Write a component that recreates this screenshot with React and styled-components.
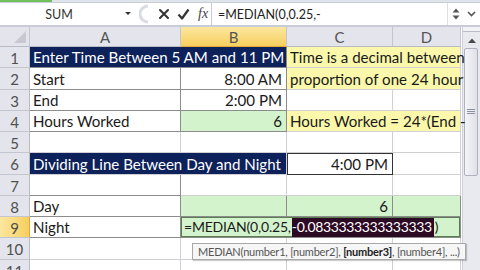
import React from 'react'
import styled, { createGlobalStyle, css } from 'styled-components'

const GlobalStyle = createGlobalStyle`
  html, body {
    margin: 0;
    padding: 0;
    background: #fff;
  }
  body {
    font-family: Lato, "Open Sans", sans-serif;
  }
`

const COLS = '30px 151px 106px 106px 68px'
const ROW_H = 21.25

const colors = {
  navy: '#0d215b',
  yellow: '#fbf8ac',
  green: '#d3f3cd',
  grid: '#d0d0d4',
  line: '#8c8c8c',
  header: '#e3e4ec',
}

const Page = styled.div`
  width: 480px;
  height: 270px;
  overflow: hidden;
  display: flex;
  flex-direction: column;
  background: #fff;
`

const RibbonEdge = styled.div`
  height: 3px;
  background: linear-gradient(to right, #6fbf5c 0, #6fbf5c 52px, #dfe3ea 52px);
  border-bottom: 1px solid #c9ced8;
  box-sizing: border-box;
`

const FormulaBar = styled.div`
  height: 22px;
  display: flex;
  align-items: stretch;
  background: #fff;
`

const NameBox = styled.div`
  width: 135px;
  position: relative;
  display: flex;
  align-items: center;
  justify-content: center;
  font-size: 12.5px;
  color: #333;
  padding-right: 17px;
  box-sizing: border-box;
`

const NameArrow = styled.span`
  position: absolute;
  right: 4px;
  top: 9px;
  width: 0;
  height: 0;
  border-left: 3px solid transparent;
  border-right: 3px solid transparent;
  border-top: 3px solid #333;
`

const Tools = styled.div`
  width: 76px;
  display: flex;
  align-items: center;
  gap: 7px;
  padding-left: 4px;
  box-sizing: border-box;
  background: #fff;
`

const Fx = styled.span`
  font-family: "Liberation Serif", serif;
  font-style: italic;
  font-size: 14px;
  color: #444;
  margin-left: 1px;
`

const FormulaInput = styled.div`
  flex: 1;
  display: flex;
  align-items: center;
  padding-left: 6px;
  font-size: 12.5px;
  color: #222;
  border-left: 1px solid #c8ccd4;
`

const Spin = styled.div`
  width: 32px;
  display: flex;
  align-items: center;
  justify-content: space-around;
  border-left: 1px solid #dde0e6;
`

const Gap = styled.div`
  height: 2px;
  background: #c8ccd6;
`

const Sheet = styled.div`
  flex: 1;
  display: flex;
  overflow: hidden;
`

const Grid = styled.div`
  width: 462px;
  display: grid;
  grid-template-columns: ${COLS};
  grid-template-rows: 20px repeat(11, ${ROW_H}px);
  position: relative;
`

const ColHead = styled.div`
  background: ${(p) => (p.$active ? 'linear-gradient(#fce7a0, #f7cf5e)' : colors.header)};
  border-right: 1px solid #c3c5cf;
  border-bottom: 1px solid ${(p) => (p.$active ? '#e3a93a' : '#b8bac6')};
  display: flex;
  align-items: center;
  justify-content: center;
  font-size: 15px;
  color: #555;
  box-sizing: border-box;
`

const Corner = styled(ColHead)`
  position: relative;
  &::after {
    content: '';
    position: absolute;
    right: 3px;
    bottom: 3px;
    width: 0;
    height: 0;
    border-left: 12px solid transparent;
    border-bottom: 12px solid #c7c8d0;
  }
`

const RowHead = styled.div`
  background: ${(p) => (p.$active ? 'linear-gradient(to right, #fce7a0, #f7cf5e)' : colors.header)};
  border-right: 1px solid ${(p) => (p.$active ? '#e3a93a' : '#b8bac6')};
  border-bottom: 1px solid #c3c5cf;
  display: flex;
  align-items: center;
  justify-content: center;
  padding-top: 2px;
  font-size: 15px;
  color: #505050;
  box-sizing: border-box;
`

const fills = {
  navy: colors.navy,
  yellow: colors.yellow,
  green: colors.green,
  white: '#fff',
}

const Cell = styled.div`
  grid-column: ${(p) => p.$col} / span ${(p) => p.$span || 1};
  background: ${(p) => fills[p.$fill || 'white']};
  color: ${(p) => (p.$fill === 'navy' ? '#fff' : '#1a1a1a')};
  border-right: 1px solid ${(p) => (p.$dark ? colors.line : colors.grid)};
  border-bottom: 1px solid ${(p) => (p.$dark ? colors.line : colors.grid)};
  box-sizing: border-box;
  display: flex;
  align-items: flex-end;
  justify-content: ${(p) => (p.$right ? 'flex-end' : 'flex-start')};
  padding: 0 4px 1px 3px;
  font-size: 15.1px;
  line-height: 18px;
  white-space: nowrap;
  overflow: visible;
  ${(p) =>
    p.$box &&
    css`
      outline: 1px solid #333;
      outline-offset: -1px;
    `}
`

const Editing = styled(Cell)`
  box-shadow: inset 0 0 0 1px #5a7d52;
  position: relative;
  z-index: 2;
  font-size: 14px;
  letter-spacing: -0.2px;
  padding-left: 3px;
`

const Selected = styled.span`
  background: #2c0a24;
  color: #fff;
  letter-spacing: -0.35px;
  margin: 0 1px -1px 1px;
  padding: 0 2px 1px 0;
`

const Tip = styled.div`
  position: absolute;
  left: 192px;
  top: 216px;
  height: 15px;
  padding: 0 5px 0 5px;
  display: flex;
  align-items: center;
  background: #f6f6f6;
  border: 1px solid #a8a8a8;
  box-shadow: 1px 1px 1px rgba(0, 0, 0, 0.2);
  font-size: 11px;
  letter-spacing: -0.22px;
  color: #555;
  white-space: pre;
  z-index: 3;
  b {
    color: #222;
  }
`

const Scrollbar = styled.div`
  width: 18px;
  display: flex;
  flex-direction: column;
  background: #e9eaf0;
  border-left: 1px solid #cfd1da;
  box-sizing: border-box;
`

const Split = styled.div`
  height: 4px;
  border-bottom: 1px solid #b8bbc6;
  background: #f2f3f6;
`

const ArrowBtn = styled.div`
  height: 16px;
  display: flex;
  align-items: center;
  justify-content: center;
`

const Thumb = styled.div`
  height: 126px;
  margin: 0 2px 0 1px;
  background: linear-gradient(to right, #f4f5f8, #dfe1e8);
  border: 1px solid #aeb2be;
  border-radius: 2px;
  display: flex;
  align-items: center;
  justify-content: center;
`

const Grip = () => (
  <svg width="8" height="6" viewBox="0 0 8 6">
    <path d="M0 0.5h8M0 2.5h8M0 4.5h8" stroke="#8d92a0" strokeWidth="1" />
  </svg>
)

const CrossIcon = () => (
  <svg width="12" height="12" viewBox="0 0 12 12">
    <path d="M2 2l8 8M10 2l-8 8" stroke="#333" strokeWidth="2" strokeLinecap="round" />
  </svg>
)

const CheckIcon = () => (
  <svg width="13" height="12" viewBox="0 0 13 12">
    <path d="M1.5 6.5l3.5 4l6.5-9" fill="none" stroke="#333" strokeWidth="2.2" strokeLinejoin="round" />
  </svg>
)

const GripArc = () => (
  <svg width="12" height="20" viewBox="0 0 12 20">
    <path d="M9 2a8 8 0 0 0 0 16" fill="none" stroke="#d9dce3" strokeWidth="3" />
  </svg>
)

const rows = [
  {
    n: 1,
    cells: [
      { col: 2, span: 2, fill: 'navy', text: 'Enter Time Between 5 AM and 11 PM', dark: true },
      { col: 4, span: 2, fill: 'yellow', text: 'Time is a decimal between' },
    ],
  },
  {
    n: 2,
    cells: [
      { col: 2, text: 'Start', dark: true },
      { col: 3, text: '8:00 AM', right: true, dark: true },
      { col: 4, span: 2, fill: 'yellow', text: 'proportion of one 24 hour' },
    ],
  },
  {
    n: 3,
    cells: [
      { col: 2, text: 'End', dark: true },
      { col: 3, text: '2:00 PM', right: true, dark: true },
      { col: 4 },
      { col: 5 },
    ],
  },
  {
    n: 4,
    cells: [
      { col: 2, text: 'Hours Worked', dark: true },
      { col: 3, fill: 'green', text: '6', right: true, dark: true },
      { col: 4, span: 2, fill: 'yellow', text: 'Hours Worked = 24*(End -' },
    ],
  },
  { n: 5, cells: [{ col: 2 }, { col: 3 }, { col: 4 }, { col: 5 }] },
  {
    n: 6,
    cells: [
      { col: 2, span: 2, fill: 'navy', text: 'Dividing Line Between Day and Night' },
      { col: 4, text: '4:00 PM', right: true, box: true },
      { col: 5 },
    ],
  },
  { n: 7, cells: [{ col: 2, dark: true }, { col: 3 }, { col: 4 }, { col: 5 }] },
  {
    n: 8,
    cells: [
      { col: 2, text: 'Day', dark: true },
      { col: 3, fill: 'green', dark: true },
      { col: 4, fill: 'green', text: '6', right: true, dark: true },
      { col: 5, fill: 'green', dark: true },
    ],
  },
  { n: 9, editing: true },
  { n: 10, cells: [{ col: 2 }, { col: 3 }, { col: 4 }, { col: 5 }] },
  { n: 11, cells: [{ col: 2 }, { col: 3 }, { col: 4 }, { col: 5 }] },
]

const renderCell = (c, key) => (
  <Cell
    key={key}
    $col={c.col}
    $span={c.span}
    $fill={c.fill}
    $right={c.right}
    $dark={c.dark}
    $box={c.box}
  >
    {c.text}
  </Cell>
)

export default function App() {
  return (
    <Page>
      <GlobalStyle />
      <RibbonEdge />
      <FormulaBar>
        <NameBox>
          SUM
          <NameArrow />
        </NameBox>
        <Tools>
          <GripArc />
          <CrossIcon />
          <CheckIcon />
          <Fx>fx</Fx>
        </Tools>
        <FormulaInput>=MEDIAN(0,0.25,-</FormulaInput>
        <Spin>
          <svg width="8" height="14" viewBox="0 0 8 14">
            <path d="M0.5 5.5L4 1.5l3.5 4zM0.5 8.5L4 12.5l3.5-4z" fill="#555" />
          </svg>
          <svg width="9" height="6" viewBox="0 0 9 6">
            <path d="M1 1l3.5 3.5L8 1" fill="none" stroke="#555" strokeWidth="1.6" />
          </svg>
        </Spin>
      </FormulaBar>
      <Gap />
      <Sheet>
        <Grid>
          <Corner />
          <ColHead>A</ColHead>
          <ColHead $active>B</ColHead>
          <ColHead>C</ColHead>
          <ColHead>D</ColHead>
          {rows.map((r) => (
            <React.Fragment key={r.n}>
              <RowHead $active={r.editing}>{r.n}</RowHead>
              {r.editing ? (
                <>
                  <Cell $col={2} $dark>
                    Night
                  </Cell>
                  <Editing $col={3} $span={3} $fill="green" $dark>
                    =MEDIAN(0,0.25,<Selected>-0.0833333333333333</Selected>)
                  </Editing>
                </>
              ) : (
                r.cells.map((c, i) => renderCell(c, i))
              )}
            </React.Fragment>
          ))}
          <Tip>
            {'MEDIAN(number1, [number2], '}
            <b>[number3]</b>
            {', [number4], ...)'}
          </Tip>
        </Grid>
        <Scrollbar>
          <Split />
          <ArrowBtn>
            <svg width="8" height="5" viewBox="0 0 8 5">
              <path d="M0 5L4 0.5L8 5z" fill="#4a4a4a" />
            </svg>
          </ArrowBtn>
          <Thumb>
            <Grip />
          </Thumb>
        </Scrollbar>
      </Sheet>
    </Page>
  )
}
